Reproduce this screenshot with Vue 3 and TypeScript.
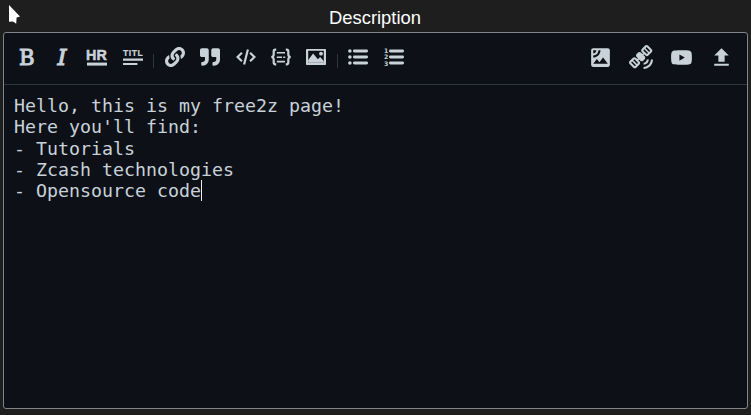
<script setup lang="ts">
import { ref } from 'vue'

interface Tool {
  name: string
  box: string
  path: string
}

const linkTools: Tool[] = [
  {
    name: 'Link',
    box: '0 0 512 512',
    path: 'M326.612 185.391c59.747 59.809 58.927 155.698.36 214.59-.11.12-.24.25-.36.37l-67.2 67.2c-59.27 59.27-155.699 59.262-214.96 0-59.27-59.26-59.27-155.7 0-214.96l37.106-37.106c9.84-9.84 26.786-3.3 27.294 10.606.648 17.722 3.826 35.527 9.69 52.721 1.986 5.822.567 12.262-3.783 16.612l-13.087 13.087c-28.026 28.026-28.905 73.66-1.155 101.96 28.024 28.579 74.086 28.749 102.325.51l67.2-67.19c28.191-28.191 28.073-73.757 0-101.83-3.701-3.694-7.429-6.564-10.341-8.569a16.037 16.037 0 0 1-6.947-12.606c-.396-10.567 3.348-21.456 11.698-29.806l21.054-21.055c5.521-5.521 14.182-6.199 20.584-1.731a152.482 152.482 0 0 1 20.522 17.197zM467.547 44.449c-59.261-59.262-155.69-59.27-214.96 0l-67.2 67.2c-.12.12-.25.25-.36.37-58.566 58.892-59.387 154.781.36 214.59a152.454 152.454 0 0 0 20.521 17.196c6.402 4.468 15.064 3.789 20.584-1.731l21.054-21.055c8.35-8.35 12.094-19.239 11.698-29.806a16.037 16.037 0 0 0-6.947-12.606c-2.912-2.005-6.64-4.875-10.341-8.569-28.073-28.073-28.191-73.639 0-101.83l67.2-67.19c28.239-28.239 74.3-28.069 102.325.51 27.75 28.3 26.872 73.934-1.155 101.96l-13.087 13.087c-4.35 4.35-5.769 10.79-3.783 16.612 5.864 17.194 9.042 34.999 9.69 52.721.509 13.906 17.454 20.446 27.294 10.606l37.106-37.106c59.271-59.259 59.271-155.699.001-214.959z',
  },
  {
    name: 'Quote',
    box: '0 0 512 512',
    path: 'M464 32H336c-26.5 0-48 21.5-48 48v128c0 26.5 21.5 48 48 48h80v64c0 35.3-28.7 64-64 64h-8c-13.3 0-24 10.7-24 24v48c0 13.3 10.7 24 24 24h8c88.4 0 160-71.6 160-160V80c0-26.5-21.5-48-48-48zm-288 0H48C21.5 32 0 53.5 0 80v128c0 26.5 21.5 48 48 48h80v64c0 35.3-28.7 64-64 64h-8c-13.3 0-24 10.7-24 24v48c0 13.3 10.7 24 24 24h8c88.4 0 160-71.6 160-160V80c0-26.5-21.5-48-48-48z',
  },
]

const mediaTools: Tool[] = [
  {
    name: 'Gallery',
    box: '0 0 24 24',
    path: 'M19 3H5c-1.1 0-2 .9-2 2v14c0 1.1.9 2 2 2h14c1.1 0 2-.9 2-2V5c0-1.1-.9-2-2-2zM5 4.99h3C8 6.65 6.66 8 5 8V4.99zM5 12v-2c2.76 0 5-2.25 5-5.01h2C12 8.86 8.87 12 5 12zm0 6l3.5-4.5 2.5 3.01L14.5 12l4.5 6H5z',
  },
  {
    name: 'Embed',
    box: '0 0 24 24',
    path: 'M21 14h2c0 4.97-4.03 9-9 9v-2c3.87 0 7-3.13 7-7zm-7 5c2.76 0 5-2.24 5-5h-2c0 1.66-1.34 3-3 3v2zM18.26.59l3.54 3.54c.78.78.78 2.05 0 2.83l-3.18 3.18c-.78.78-2.05.78-2.83 0l-1.24-1.24-.71.7 1.24 1.24c.78.78.78 2.05 0 2.83l-1.41 1.41c-.78.78-2.05.78-2.83 0L9.6 13.84l-.71.71 1.24 1.24c.78.78.78 2.05 0 2.83L6.95 21.8c-.78.78-2.05.78-2.83 0L.58 18.26c-.78-.78-.78-2.05 0-2.83l3.18-3.18c.78-.78 2.05-.78 2.83 0l1.24 1.24.71-.71L7.3 11.55c-.78-.78-.78-2.05 0-2.83l1.41-1.41c.78-.78 2.05-.78 2.83 0l1.24 1.24.71-.71-1.24-1.24c-.78-.78-.78-2.05 0-2.83l3.18-3.18c.78-.79 2.05-.79 2.83 0zM3.06 15.78L2 16.84l3.54 3.54 1.06-1.06zM5.18 13.66l-1.06 1.06 3.54 3.54 1.06-1.06zM14.73 4.12l-1.06 1.06 3.54 3.54 1.06-1.06zM16.85 2l-1.06 1.06 3.54 3.54 1.06-1.06z',
  },
  {
    name: 'Video',
    box: '0 0 24 24',
    path: 'M10 15l5.19-3L10 9v6m11.56-7.83c.13.47.22 1.1.28 1.9.07.8.1 1.49.1 2.09L22 12c0 2.19-.16 3.8-.44 4.83-.25.9-.83 1.48-1.73 1.73-.47.13-1.33.22-2.65.28-1.3.07-2.49.1-3.59.1L12 19c-4.19 0-6.8-.16-7.83-.44-.9-.25-1.48-.83-1.73-1.73-.13-.47-.22-1.1-.28-1.9-.07-.8-.1-1.49-.1-2.09L2 12c0-2.19.16-3.8.44-4.83.25-.9.83-1.48 1.73-1.73.47-.13 1.33-.22 2.65-.28 1.3-.07 2.49-.1 3.59-.1L12 5c4.19 0 6.8.16 7.83.44.9.25 1.48.83 1.73 1.73z',
  },
  {
    name: 'Upload',
    box: '0 0 24 24',
    path: 'M5 20h14v-2H5v2zm0-10h4v6h6v-6h4l-7-7-7 7z',
  },
]

const lines = ref<string[]>([
  'Hello, this is my free2z page!',
  "Here you'll find:",
  '- Tutorials',
  '- Zcash technologies',
  '- Opensource code',
])
</script>

<template>
  <main class="page">
    <svg class="pointer" viewBox="0 0 12 20">
      <path d="M0 0L11 11.4L7.6 12.4L7.2 18.8L4 16.4L0 16.8Z" />
    </svg>
    <h1 class="title">Description</h1>
    <section class="editor">
      <header class="toolbar">
        <div class="group">
          <button class="tool">
            <svg class="icon" viewBox="0 0 20 20">
              <text class="slab" transform="translate(2 18.3) scale(.93 1)">B</text>
            </svg>
          </button>
          <button class="tool">
            <svg class="icon" viewBox="0 0 20 20">
              <text class="slab italic" transform="translate(5.6 18.3)">I</text>
            </svg>
          </button>
          <button class="tool">
            <svg class="icon" viewBox="0 0 20 20">
              <text class="caps" transform="translate(-.9 13) scale(.97 1)">HR</text>
              <path d="M0 15.6h20v3H0z" />
            </svg>
          </button>
          <button class="tool">
            <svg class="icon" viewBox="0 0 20 20">
              <text class="caps small" x="0" y="9.2">TITL</text>
              <path d="M0 11.6h20v2.2H0zM0 15.9h14.4v2.2H0z" />
            </svg>
          </button>
          <i class="divider"></i>
          <button v-for="t in linkTools" :key="t.name" class="tool">
            <svg class="icon" :viewBox="t.box"><path :d="t.path" /></svg>
          </button>
          <button class="tool">
            <svg class="icon line" viewBox="0 0 20 20">
              <path d="M5.9 5.8L1.6 10l4.3 4.2M14.1 5.8l4.3 4.2-4.3 4.2M11.9 2.5L8.1 17.5" />
            </svg>
          </button>
          <button class="tool">
            <svg class="icon brace" viewBox="0 0 20 20">
              <path d="M5.2 2.7H4.4Q2.7 2.7 2.7 4.4V7.4Q2.7 9.5 .5 10Q2.7 10.5 2.7 12.6V15.6Q2.7 17.3 4.4 17.3H5.2M14.8 2.7H15.6Q17.3 2.7 17.3 4.4V7.4Q17.3 9.5 19.5 10Q17.3 10.5 17.3 12.6V15.6Q17.3 17.3 15.6 17.3H14.8" />
              <path class="thin" d="M5.8 5.8h8.2M5.8 10.2h5.2M12.2 10.2h2M5.8 14.6h8.2" />
            </svg>
          </button>
          <button class="tool">
            <svg class="icon" viewBox="0 0 20 20">
              <path fill-rule="evenodd" d="M.8 2h18.4q.8 0 .8.8v14.4q0 .8-.8.8H.8q-.8 0-.8-.8V2.8Q0 2 .8 2zM2.2 3.8v12h15.6v-12z" />
              <circle cx="15" cy="6.7" r="1.9" />
              <path d="M2.2 15.8V13L7.1 6.6l4.8 5.7 2.2-2.2 3.7 4v1.7z" />
            </svg>
          </button>
          <i class="divider"></i>
          <button class="tool">
            <svg class="icon" viewBox="0 0 20 20">
              <circle cx="1.9" cy="4" r="1.8" /><circle cx="1.9" cy="10" r="1.8" /><circle cx="1.9" cy="16" r="1.8" />
              <path class="rows" d="M6.4 4h12.2M6.4 10h12.2M6.4 16h12.2" />
            </svg>
          </button>
          <button class="tool">
            <svg class="icon" viewBox="0 0 20 20">
              <text class="num" x="0" y="6">1</text>
              <text class="num" x="0" y="12.3">2</text>
              <text class="num" x="0" y="18.6">3</text>
              <path class="rows" d="M6.4 4h12.2M6.4 10h12.2M6.4 16h12.2" />
            </svg>
          </button>
        </div>
        <div class="group">
          <button v-for="t in mediaTools" :key="t.name" class="tool wide">
            <svg class="icon big" :viewBox="t.box"><path fill-rule="evenodd" :d="t.path" /></svg>
          </button>
        </div>
      </header>
      <div class="content">
        <div v-for="(line, i) in lines" :key="i" class="row">
          <span>{{ line }}</span><i v-if="i === lines.length - 1" class="caret"></i>
        </div>
      </div>
    </section>
  </main>
</template>

<style>
body {
  margin: 0;
  background: #1e1e1e;
}
</style>

<style scoped>
.page {
  box-sizing: border-box;
  height: 415px;
  padding: 0 3px 6px;
  display: flex;
  flex-direction: column;
  position: relative;
  background: #1e1e1e;
}
.pointer {
  position: absolute;
  left: 9px;
  top: 5px;
  width: 12px;
  height: 20px;
  fill: #fff;
}
.title {
  box-sizing: border-box;
  height: 32px;
  margin: 0;
  padding: 7px 1px 0 0;
  text-align: center;
  font: 400 18.4px/21px "Liberation Sans", sans-serif;
  color: #fff;
}
.editor {
  flex: 1;
  box-sizing: border-box;
  border: 1px solid #80858a;
  border-radius: 3px;
  background: #0d1117;
}
.toolbar {
  box-sizing: border-box;
  height: 52px;
  padding: 0 5px 3px 4.9px;
  border-bottom: 1px solid #30363d;
  display: flex;
  justify-content: space-between;
}
.group {
  display: flex;
  align-items: center;
}
.tool {
  width: 35.4px;
  height: 30px;
  padding: 0;
  border: 0;
  background: none;
  display: flex;
  align-items: center;
  justify-content: center;
}
.wide {
  width: 40.4px;
}
.icon {
  display: block;
  width: 20px;
  height: 20px;
  fill: #c9d1d9;
  overflow: visible;
}
.big {
  width: 25px;
  height: 25px;
}
.slab {
  font: 400 22.8px "DejaVu Serif", serif;
  stroke: #c9d1d9;
  stroke-width: 1.1px;
}
.italic {
  font-style: italic;
}
.caps {
  font: 700 14.8px "Liberation Sans", sans-serif;
  stroke: #c9d1d9;
  stroke-width: 0.5px;
}
.small {
  font-size: 8.6px;
  letter-spacing: 0.5px;
  stroke-width: 0.2px;
}
.num {
  font: 700 6.2px "DejaVu Sans", sans-serif;
}
.line {
  fill: none;
  stroke: #c9d1d9;
  stroke-width: 2.2;
}
.brace {
  fill: none;
  stroke: #c9d1d9;
  stroke-width: 2.2;
}
.thin {
  stroke-width: 1.6;
}
.rows {
  stroke: #c9d1d9;
  stroke-width: 2.9;
  stroke-linecap: round;
}
.divider {
  width: 1px;
  height: 14px;
  margin: 8px 2.8px 0 2.9px;
  background: #30363d;
}
.content {
  padding: 10px;
  font: 18.28px/21.3px "DejaVu Sans Mono", monospace;
  color: #c9d1d9;
  white-space: pre;
}
.row {
  height: 21.3px;
  display: flex;
}
.caret {
  width: 1px;
  height: 21px;
  background: #e6edf3;
}
</style>
